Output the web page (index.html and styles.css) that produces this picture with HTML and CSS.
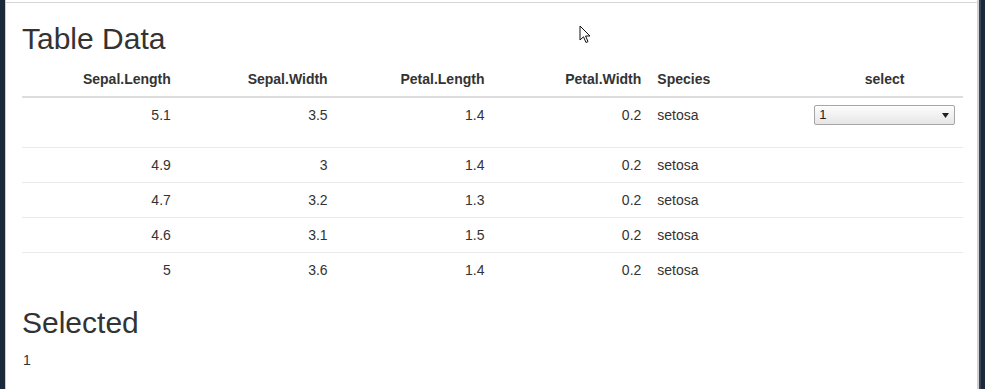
FILE: index.html
```html
<!DOCTYPE html>
<html lang="en">
<head>
    <meta charset="UTF-8">
    <meta name="viewport" content="width=device-width, initial-scale=1.0">
    <title>Table Data</title>
    <link rel="stylesheet" href="styles.css">
</head>
<body>

    <div class="desk desk-left"></div>

    <div class="window">
        <div class="page">
            <h2 class="title">Table Data</h2>

            <table class="data-table">
                <thead>
                    <tr>
                        <th class="num">Sepal.Length</th>
                        <th class="num">Sepal.Width</th>
                        <th class="num">Petal.Length</th>
                        <th class="num">Petal.Width</th>
                        <th>Species</th>
                        <th class="center">select</th>
                    </tr>
                </thead>
                <tbody>
                    <tr>
                        <td class="num">5.1</td>
                        <td class="num">3.5</td>
                        <td class="num">1.4</td>
                        <td class="num">0.2</td>
                        <td>setosa</td>
                        <td>
                            <div class="select-box">
                                <span>1</span>
                                <svg class="caret" width="7" height="5" viewBox="0 0 7 5"><path d="M0 0 H7 L3.5 5 Z" fill="#222"/></svg>
                            </div>
                        </td>
                    </tr>
                    <tr>
                        <td class="num">4.9</td>
                        <td class="num">3</td>
                        <td class="num">1.4</td>
                        <td class="num">0.2</td>
                        <td>setosa</td>
                        <td></td>
                    </tr>
                    <tr>
                        <td class="num">4.7</td>
                        <td class="num">3.2</td>
                        <td class="num">1.3</td>
                        <td class="num">0.2</td>
                        <td>setosa</td>
                        <td></td>
                    </tr>
                    <tr>
                        <td class="num">4.6</td>
                        <td class="num">3.1</td>
                        <td class="num">1.5</td>
                        <td class="num">0.2</td>
                        <td>setosa</td>
                        <td></td>
                    </tr>
                    <tr>
                        <td class="num">5</td>
                        <td class="num">3.6</td>
                        <td class="num">1.4</td>
                        <td class="num">0.2</td>
                        <td>setosa</td>
                        <td></td>
                    </tr>
                </tbody>
            </table>

            <h2 class="selected-title">Selected</h2>
            <p class="selected-value">1</p>
        </div>

        <!-- mouse pointer over the page -->
        <svg class="cursor" width="13" height="19" viewBox="0 0 13 19">
            <path d="M1 1 L1 15 L4.5 11.8 L7 17.5 L9 16.6 L6.6 11 L11 11 Z" fill="#fff" stroke="#111" stroke-width="1" stroke-linejoin="round"/>
        </svg>
    </div>

    <div class="desk desk-right"></div>

</body>
</html>
```

FILE: styles.css
```css
html, body {
    margin: 0;
    height: 389px;
    overflow: hidden;
}
body {
    display: flex;
    background-color: #fff;
    font-family: "Liberation Sans", Arial, sans-serif;
    font-size: 14px;
    line-height: 20px;
    color: #333;
}
.desk {
    background-color: #1b2a3b;
}
.desk-left {
    width: 5px;
}
.desk-right {
    width: 4px;
    border-left: 2px solid #3c4651;
}
.window {
    flex: 1;
    position: relative;
    padding-top: 2px;
    border-left: 1px solid #c9ccd0;
    border-right: 2px solid #cfd1d4;
}
.page {
    border-top: 1px solid #d6d6d6;
    padding: 0 14px 0 16px;
}
h2 {
    font-size: 30px;
    font-weight: 500;
    line-height: 33px;
    margin: 0;
}
.title {
    margin-top: 19px;
    margin-bottom: 7px;
}
.data-table {
    width: 100%;
    border-collapse: collapse;
    table-layout: fixed;
}
.data-table th,
.data-table td {
    padding: 7px 8px;
    text-align: left;
    vertical-align: top;
}
.data-table th {
    font-weight: bold;
    vertical-align: bottom;
    border-bottom: 2px solid #ddd;
}
.data-table tbody tr + tr td {
    border-top: 1px solid #e9e9e9;
}
.data-table .num {
    text-align: right;
}
.data-table .center {
    text-align: center;
}
.select-box {
    display: flex;
    align-items: center;
    justify-content: space-between;
    box-sizing: border-box;
    height: 20px;
    margin-bottom: 15px;
    padding: 0 5px 0 4px;
    border: 1px solid #a6a6a6;
    border-radius: 2px;
    background: linear-gradient(#fdfdfd, #e6e6e6);
    font-size: 13px;
    color: #222;
}
.caret {
    display: block;
}
.selected-title {
    margin-top: 19px;
    margin-bottom: 11px;
}
.selected-value {
    margin: 0;
    padding-left: 1px;
}
.cursor {
    position: absolute;
    left: 573px;
    top: 25px;
}
```
